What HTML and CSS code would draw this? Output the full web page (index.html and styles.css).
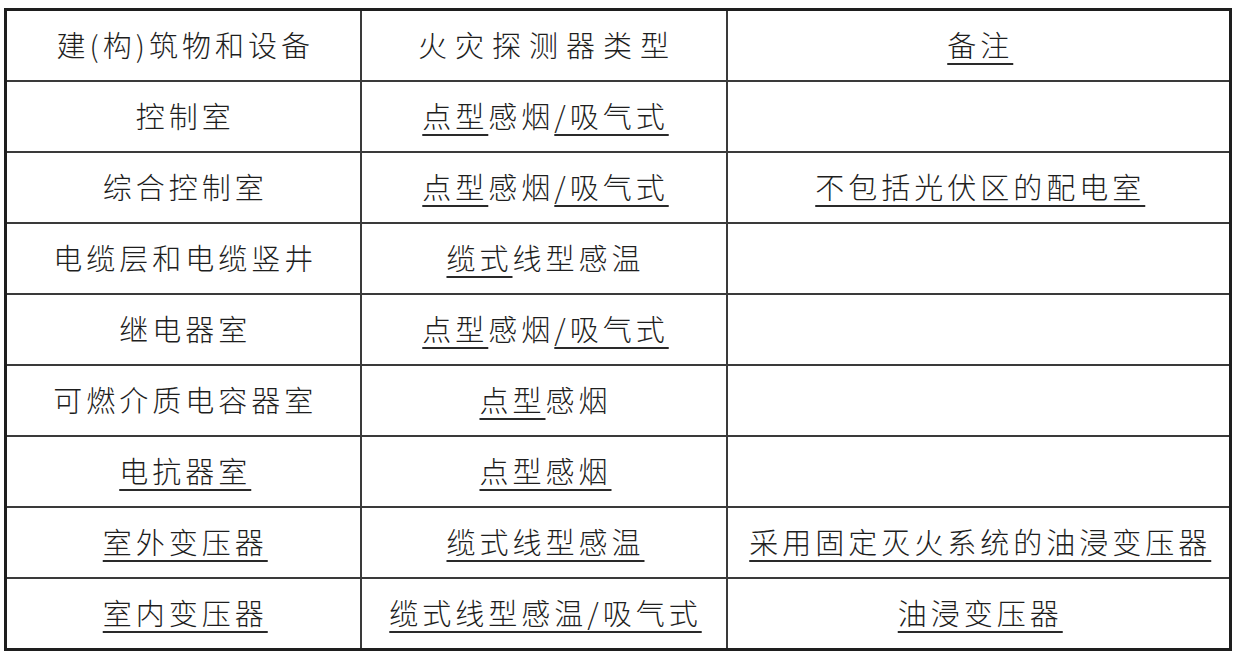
FILE: index.html
```html
<!DOCTYPE html>
<html lang="zh-CN">
<head>
<meta charset="utf-8">
<title>火灾探测器类型</title>
<link rel="stylesheet" href="styles.css">
</head>
<body>
<table class="spec">
  <colgroup>
    <col class="c1"><col class="c2"><col class="c3">
  </colgroup>
  <tr>
    <td>建(构)筑物和设备</td>
    <td class="wide">火灾探测器类型</td>
    <td><span class="u">备注</span></td>
  </tr>
  <tr>
    <td>控制室</td>
    <td><span class="u">点型</span>感烟<span class="u">/吸气式</span></td>
    <td></td>
  </tr>
  <tr>
    <td>综合控制室</td>
    <td><span class="u">点型</span>感烟<span class="u">/吸气式</span></td>
    <td><span class="u">不包括光伏区的配电室</span></td>
  </tr>
  <tr>
    <td>电缆层和电缆竖井</td>
    <td><span class="u">缆式</span>线型感温</td>
    <td></td>
  </tr>
  <tr>
    <td>继电器室</td>
    <td><span class="u">点型</span>感烟<span class="u">/吸气式</span></td>
    <td></td>
  </tr>
  <tr>
    <td>可燃介质电容器室</td>
    <td><span class="u">点型</span>感烟</td>
    <td></td>
  </tr>
  <tr>
    <td><span class="u">电抗器室</span></td>
    <td><span class="u">点型感烟</span></td>
    <td></td>
  </tr>
  <tr>
    <td><span class="u">室外变压器</span></td>
    <td><span class="u">缆式线型感温</span></td>
    <td><span class="u">采用固定灭火系统的油浸变压器</span></td>
  </tr>
  <tr>
    <td><span class="u">室内变压器</span></td>
    <td><span class="u">缆式线型感温/吸气式</span></td>
    <td><span class="u">油浸变压器</span></td>
  </tr>
</table>
</body>
</html>
```

FILE: styles.css
```css
html, body {
  margin: 0;
  padding: 0;
  background: #ffffff;
}
body {
  padding: 8px 5px 0 4px;
  font-family: "Noto Sans CJK SC", "Noto Sans CJK JP", sans-serif;
  color: #1e1e1e;
}
.spec {
  width: 1225px;
  border-collapse: collapse;
  border: 3px solid #1e1e1e;
  table-layout: fixed;
}
.c1 { width: 355px; }
.c2 { width: 366px; }
.c3 { width: 504px; }
.spec td {
  height: 66px;
  padding: 0 0 3px 0;
  border: 2px solid #3a3a3a;
  text-align: center;
  vertical-align: middle;
  font-size: 29px;
  font-weight: 300;
  letter-spacing: 4px;
  text-indent: 4px;
  line-height: 1;
  white-space: nowrap;
}
.spec td.wide {
  letter-spacing: 8px;
  text-indent: 8px;
}
.u {
  text-decoration: underline;
  text-decoration-thickness: 2px;
  text-underline-offset: 6px;
  text-decoration-color: #2a2a2a;
}
```
